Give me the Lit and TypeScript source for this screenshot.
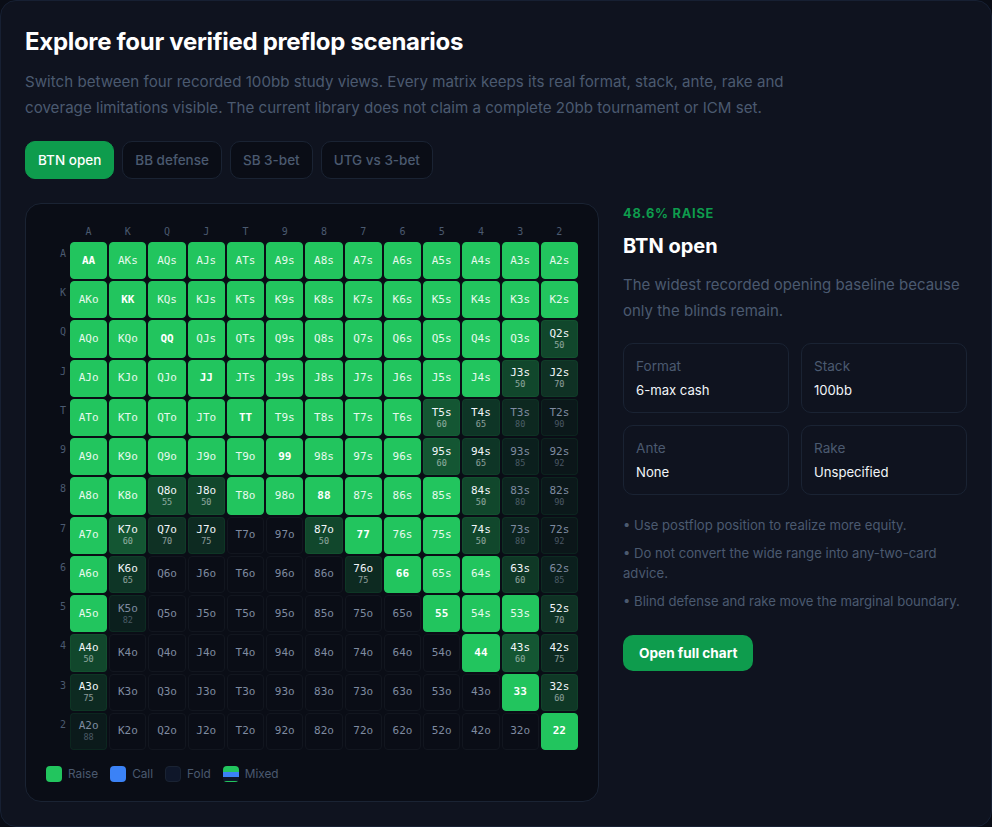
import {html, css, LitElement} from 'lit';
import {customElement} from 'lit/decorators.js';
import {classMap} from 'lit/directives/class-map.js';

const RANKS = ['A', 'K', 'Q', 'J', 'T', '9', '8', '7', '6', '5', '4', '3', '2'];

// mixed hands: [number shown in the cell, green alpha, dim text]
const MIXED: Record<string, [number, number, boolean?]> = {
	Q2s: [50, 0.32], J3s: [50, 0.32], J2s: [70, 0.2],
	T5s: [60, 0.4], T4s: [65, 0.22], T3s: [80, 0.15, true], T2s: [90, 0.06, true],
	'95s': [60, 0.4], '94s': [65, 0.22], '93s': [85, 0.1, true], '92s': [92, 0.05, true],
	'84s': [50, 0.32], '83s': [80, 0.13, true], '82s': [90, 0.06, true],
	'74s': [50, 0.32], '73s': [80, 0.13, true], '72s': [92, 0.05, true],
	'63s': [60, 0.24], '62s': [85, 0.1, true],
	'52s': [70, 0.2], '43s': [60, 0.4], '42s': [75, 0.16], '32s': [60, 0.24],
	Q8o: [55, 0.36], J8o: [50, 0.32],
	K7o: [60, 0.4], Q7o: [70, 0.2], J7o: [75, 0.16], '87o': [50, 0.32],
	K6o: [65, 0.22], '76o': [75, 0.16], K5o: [82, 0.1, true],
	A4o: [50, 0.32], A3o: [75, 0.16], A2o: [88, 0.07, true],
};

// last raised kicker per row, suited and offsuit
const RAISE_SUITED: Record<string, string> = {
	A: '2', K: '2', Q: '3', J: '4', T: '6', '9': '6', '8': '5', '7': '5', '6': '4', '5': '3',
};
const RAISE_OFF: Record<string, string> = {
	A: '5', K: '8', Q: '9', J: '9', T: '8', '9': '8',
};

function isRaise(hi: string, lo: string, suited: boolean) {
	const last = (suited ? RAISE_SUITED : RAISE_OFF)[hi];
	return last !== undefined && RANKS.indexOf(lo) <= RANKS.indexOf(last);
}

@customElement('app-root')
export class AppRoot extends LitElement {
	static styles = css`
		:host {
			display: block;
			background: #0a0d16;
			font-family: Inter, 'Noto Sans', sans-serif;
			color: #fff;
		}

		.card {
			box-sizing: border-box;
			height: 827px;
			padding: 24px;
			background: #0f131f;
			border: 1px solid #172033;
			border-radius: 16px;
		}

		h1 {
			margin: 0;
			font-size: 24px;
			line-height: 34px;
			font-weight: 700;
			letter-spacing: -0.3px;
		}

		.intro {
			margin: 10px 0 0;
			max-width: 768px;
			font-size: 15.13px;
			line-height: 26px;
			color: #4b5a70;
		}

		.tabs {
			display: flex;
			gap: 8px;
			margin-top: 20px;
		}

		.tab {
			box-sizing: border-box;
			height: 38px;
			padding: 0 12px;
			display: flex;
			align-items: center;
			font-size: 13.5px;
			font-weight: 500;
			color: #4b5a70;
			background: #0a0d16;
			border: 1px solid #1a2333;
			border-radius: 10px;
		}

		.tab.active {
			color: #fff;
			background: #0e9c4d;
			border-color: #0e9c4d;
		}

		.body {
			display: grid;
			grid-template-columns: minmax(0, 1fr) 344px;
			gap: 24px;
			margin-top: 24px;
		}

		.panel {
			padding: 20px 20px 19px;
			background: #0a0d16;
			border: 1px solid #1a2333;
			border-radius: 16px;
		}

		.matrix {
			display: grid;
			grid-template-columns: 22px repeat(13, minmax(0, 1fr));
			gap: 2px;
			font-family: 'DejaVu Sans Mono', 'Liberation Mono', monospace;
		}

		.col-label {
			height: 16px;
			line-height: 15px;
			text-align: center;
			font-size: 10px;
			color: #4b5a70;
		}

		.row-label {
			padding: 6px 2px 0 0;
			line-height: 12px;
			text-align: right;
			font-size: 10px;
			color: #4b5a70;
		}

		.cell {
			box-sizing: border-box;
			aspect-ratio: 1;
			display: flex;
			flex-direction: column;
			align-items: center;
			justify-content: center;
			font-size: 11px;
			line-height: 12px;
			color: #7f8ba0;
			background: #0a0d16;
			border: 1px solid #12161f;
			border-radius: 4px;
		}

		.cell.raise {
			color: #e6f9ed;
			background: #22c55e;
			border-color: #22c55e;
		}

		.cell.pair {
			color: #fff;
			font-weight: 700;
		}

		.cell.mixed {
			color: #f1f5f9;
			border-color: rgba(34, 197, 94, 0.08);
		}

		.cell.dim {
			color: #7f8ba0;
		}

		.cell small {
			font-size: 8.5px;
			line-height: 10px;
			opacity: 0.55;
		}

		.legend {
			display: flex;
			gap: 12px;
			margin-top: 16px;
			font-size: 11.8px;
			line-height: 16px;
			color: #4b5a70;
		}

		.legend span {
			display: flex;
			align-items: center;
			gap: 6px;
		}

		.legend i {
			box-sizing: border-box;
			width: 16px;
			height: 16px;
			border-radius: 4px;
		}

		.s-raise {
			background: #22c55e;
		}

		.s-call {
			background: #3b82f6;
		}

		.s-fold {
			background: #0f172a;
			border: 1px solid #1a2333;
		}

		.s-mixed {
			background: linear-gradient(#22c55e 0 40%, #3b82f6 40% 68%, #0f172a 68% 92%, #22c55e 92%);
		}

		.side-tag {
			margin: 0;
			font-size: 12.8px;
			line-height: 21px;
			font-weight: 700;
			letter-spacing: 0.77px;
			color: #0e9c4d;
		}

		h2 {
			margin: 8px 0 0;
			font-size: 20px;
			line-height: 28px;
			font-weight: 700;
		}

		.side-desc {
			margin: 12px 0 0;
			font-size: 15px;
			line-height: 26px;
			color: #4b5a70;
		}

		.stats {
			display: grid;
			grid-template-columns: 1fr 1fr;
			gap: 12px;
			margin-top: 19px;
		}

		.stat {
			box-sizing: border-box;
			height: 70px;
			padding: 11px 12px;
			background: #0f131f;
			border: 1px solid #1a2333;
			border-radius: 10px;
		}

		.stat div:first-child {
			font-size: 13.6px;
			line-height: 23px;
			color: #4b5a70;
		}

		.stat div:last-child {
			font-size: 13.12px;
			line-height: 25px;
			color: #f1f5f9;
		}

		.notes {
			margin-top: 20px;
			font-size: 13.12px;
			line-height: 20px;
			color: #4b5a70;
		}

		.notes p {
			margin: 0 0 8px;
		}

		.cta {
			display: inline-flex;
			align-items: center;
			height: 36px;
			margin-top: 16px;
			padding: 0 16px;
			font-size: 13.6px;
			font-weight: 700;
			color: #fff;
			background: #0e9c4d;
			border-radius: 10px;
		}
	`;

	private renderCell(row: number, col: number) {
		const a = RANKS[row];
		const b = RANKS[col];
		const pair = row === col;
		const suited = col > row;
		const hand = pair ? a + b : suited ? `${a}${b}s` : `${b}${a}o`;
		const mix = MIXED[hand];
		const raise = pair || (!mix && isRaise(suited ? a : b, suited ? b : a, suited));
		const classes = {
			cell: true,
			raise,
			pair,
			mixed: !!mix,
			dim: !!mix && !!mix[2],
		};
		const style = mix ? `background: rgba(34, 197, 94, ${mix[1]})` : '';
		return html`<div class=${classMap(classes)} style=${style}>
			${hand}${mix ? html`<small>${mix[0]}</small>` : ''}
		</div>`;
	}

	render() {
		return html`<div class="card">
			<h1>Explore four verified preflop scenarios</h1>
			<p class="intro">
				Switch between four recorded 100bb study views. Every matrix keeps its real format, stack, ante, rake and
				coverage limitations visible. The current library does not claim a complete 20bb tournament or ICM set.
			</p>
			<div class="tabs">
				<div class="tab active">BTN open</div>
				<div class="tab">BB defense</div>
				<div class="tab">SB 3-bet</div>
				<div class="tab">UTG vs 3-bet</div>
			</div>
			<div class="body">
				<div class="panel">
					<div class="matrix">
						<div></div>
						${RANKS.map((r) => html`<div class="col-label">${r}</div>`)}
						${RANKS.map(
							(r, row) => html`<div class="row-label">${r}</div>
								${RANKS.map((_, col) => this.renderCell(row, col))}`
						)}
					</div>
					<div class="legend">
						<span><i class="s-raise"></i>Raise</span>
						<span><i class="s-call"></i>Call</span>
						<span><i class="s-fold"></i>Fold</span>
						<span><i class="s-mixed"></i>Mixed</span>
					</div>
				</div>
				<div>
					<p class="side-tag">48.6% RAISE</p>
					<h2>BTN open</h2>
					<p class="side-desc">The widest recorded opening baseline because only the blinds remain.</p>
					<div class="stats">
						<div class="stat"><div>Format</div><div>6-max cash</div></div>
						<div class="stat"><div>Stack</div><div>100bb</div></div>
						<div class="stat"><div>Ante</div><div>None</div></div>
						<div class="stat"><div>Rake</div><div>Unspecified</div></div>
					</div>
					<div class="notes">
						<p>• Use postflop position to realize more equity.</p>
						<p>• Do not convert the wide range into any-two-card advice.</p>
						<p>• Blind defense and rake move the marginal boundary.</p>
					</div>
					<div class="cta">Open full chart</div>
				</div>
			</div>
		</div>`;
	}
}
